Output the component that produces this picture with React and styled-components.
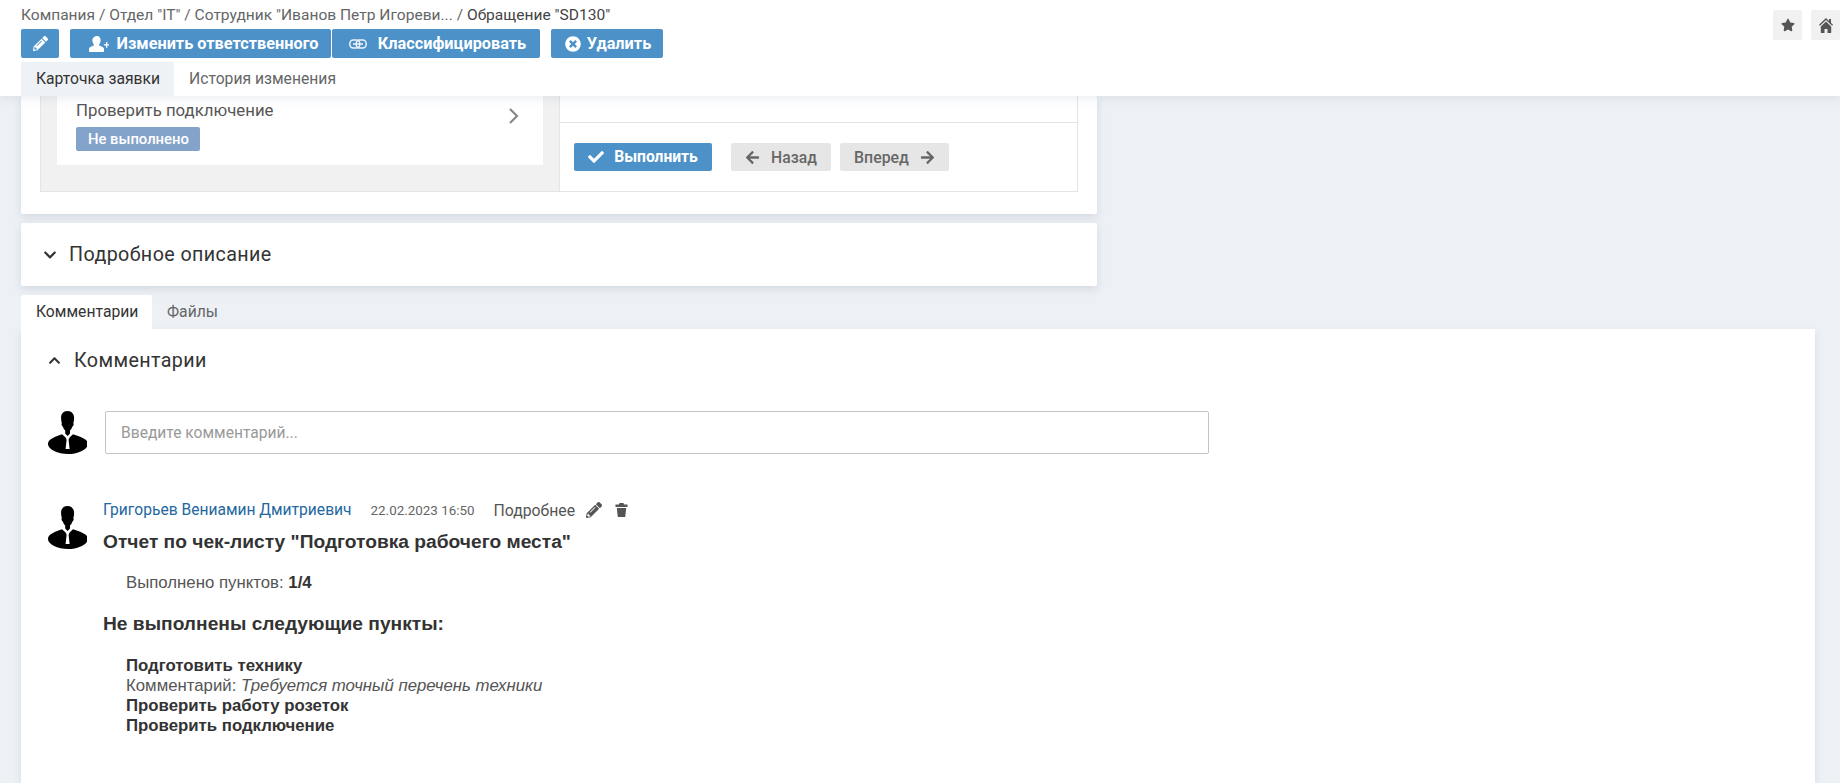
import React from 'react';
import styled, { createGlobalStyle } from 'styled-components';
import {
  FaPencilAlt, FaTimesCircle, FaCheck, FaArrowLeft, FaArrowRight,
  FaStar, FaChevronDown, FaChevronUp,
} from 'react-icons/fa';

const GlobalStyle = createGlobalStyle`
  html, body {
    margin: 0;
    padding: 0;
    background: #edf1f6;
  }
  * {
    box-sizing: border-box;
  }
`;

const Page = styled.div`
  height: 783px;
  overflow: hidden;
  font-family: Roboto, sans-serif;
  color: #333;
  background: #edf1f6;
`;

const Header = styled.header`
  position: relative;
  z-index: 2;
  height: 96px;
  padding: 0 0 0 21px;
  display: flex;
  justify-content: space-between;
  background: #fff;
  box-shadow: 0 2px 10px rgba(60, 80, 110, 0.1);
`;

const HeaderMain = styled.div`
  display: flex;
  flex-direction: column;
`;

const Breadcrumb = styled.div`
  height: 29px;
  padding-top: 5px;
  font-size: 15.55px;
  line-height: 20px;
  white-space: nowrap;
  color: #666;

  b {
    font-weight: 400;
    color: #444;
  }
`;

const Toolbar = styled.div`
  display: flex;
  height: 29px;
  gap: 11px;
`;

const ButtonGroup = styled.div`
  display: flex;
  gap: 1px;
`;

const Button = styled.button`
  height: ${(p) => p.$height || 29}px;
  width: ${(p) => p.$width}px;
  padding: 0 0 0 ${(p) => p.$shift || 0}px;
  display: flex;
  align-items: center;
  justify-content: center;
  gap: ${(p) => p.$gap ?? 8}px;
  border: none;
  border-radius: 2px;
  font-family: Roboto, sans-serif;
  font-size: ${(p) => p.$size || 16.3}px;
  font-weight: 700;
  white-space: nowrap;
  background: #4d91c9;
  color: #fff;
`;

const GreyButton = styled(Button)`
  font-weight: 500;
  background: #e6e6e6;
  color: #666;
`;

const Tabs = styled.div`
  display: flex;
  margin-top: ${(p) => p.$top || 0}px;
  height: 34px;
`;

const Tab = styled.div`
  width: ${(p) => p.$width}px;
  padding-left: 15px;
  font-size: 15.7px;
  line-height: 34px;
  border-radius: 2px 2px 0 0;
  white-space: nowrap;
  color: ${(p) => (p.$active ? '#333' : '#666')};
  background: ${(p) => (p.$active ? p.$activeBg : 'transparent')};
`;

const HeaderActions = styled.div`
  display: flex;
  gap: 9px;
  padding-top: 10px;
`;

const SquareButton = styled.div`
  width: 29px;
  height: 30px;
  display: flex;
  align-items: center;
  justify-content: center;
  border-radius: 2px;
  background: #f1f1f1;
  color: #555;
`;

const Content = styled.main`
  padding: 0 25px 0 21px;
`;

const Card = styled.section`
  width: 1076px;
  background: #fff;
  border-radius: 2px;
  box-shadow: 0 3px 8px rgba(60, 80, 110, 0.15);
`;

const StepCard = styled(Card)`
  height: 118px;
  padding: 0 19px 0 19px;
`;

const StepPanel = styled.div`
  height: 96px;
  display: flex;
  border: 1px solid #e4e4e4;
  border-top: none;
`;

const StepList = styled.div`
  width: 519px;
  padding: 0 16px;
  background: #f1f1f1;
  border-right: 1px solid #e4e4e4;
`;

const StepItem = styled.div`
  height: 69px;
  padding: 4px 19px 0;
  display: flex;
  justify-content: space-between;
  background: #fff;
`;

const StepText = styled.div`
  font-size: 16.8px;
  line-height: 20px;
  color: #555;
`;

const StepChevron = styled.div`
  padding: 7px 5px 0 0;
  color: #888;
  line-height: 0;
`;

const Badge = styled.div`
  width: 124px;
  height: 24px;
  margin-top: 7px;
  padding-left: 12px;
  border-radius: 2px;
  font-size: 14.8px;
  font-weight: 500;
  line-height: 24px;
  color: #fff;
  background: #84a3cb;
`;

const StepSide = styled.div`
  flex: 1;
  display: flex;
  flex-direction: column;
`;

const StepSideTop = styled.div`
  height: 27px;
  border-bottom: 1px solid #e4e4e4;
`;

const StepActions = styled.div`
  display: flex;
  padding: 20px 0 0 14px;
  gap: 9px;
`;

const DoneButton = styled(Button)`
  margin-right: 10px;
`;

const AccordionCard = styled(Card)`
  height: 63px;
  margin-top: 9px;
  padding: 0 22px;
  display: flex;
  align-items: center;
  gap: 12px;
`;

const SectionTitle = styled.h2`
  margin: 0;
  font-size: 19.7px;
  font-weight: 400;
  letter-spacing: 0.4px;
  white-space: nowrap;
  color: #333;
`;

const TabsPanel = styled.section`
  height: 454px;
  padding: 19px 0 0 27px;
  background: #fff;
  box-shadow: 0 3px 8px rgba(60, 80, 110, 0.12);
`;

const PanelHeader = styled.div`
  display: flex;
  align-items: center;
  gap: 13px;
  height: 24px;
`;

const InputRow = styled.div`
  display: flex;
  align-items: center;
  gap: 18px;
  margin-top: 39px;
`;

const CommentInput = styled.input`
  width: 1104px;
  height: 43px;
  padding: 0 15px;
  border: 1px solid #c4c4c4;
  border-radius: 2px;
  font-family: Roboto, sans-serif;
  font-size: 15.6px;
  color: #333;

  &::placeholder {
    color: #999;
  }
`;

const Comment = styled.article`
  display: flex;
  gap: 16px;
  margin-top: 52px;
`;

const AvatarBox = styled.div`
  width: 39px;
  flex: none;
  line-height: 0;
`;

const CommentBody = styled.div`
  flex: 1;
`;

const CommentMeta = styled.div`
  display: flex;
  align-items: center;
  height: 20px;
  margin-top: -6px;
`;

const Author = styled.a`
  font-size: 15.6px;
  color: #23679f;
`;

const DateText = styled.span`
  margin-left: 19px;
  font-size: 13.4px;
  color: #666;
`;

const MoreLink = styled.span`
  margin-left: 19px;
  font-size: 15.8px;
  color: #555;
`;

const MetaIcon = styled.span`
  margin-left: ${(p) => p.$left}px;
  line-height: 0;
  color: #555;
`;

const Report = styled.div`
  font-family: 'Liberation Sans', Arial, sans-serif;
  color: #333;
`;

const ReportTitle = styled.div`
  margin-top: ${(p) => p.$top}px;
  font-size: 19.2px;
  line-height: 24px;
  font-weight: 700;
  white-space: nowrap;
`;

const ReportBlock = styled.div`
  margin-top: ${(p) => p.$top}px;
  padding-left: 23px;
  font-size: 16.8px;
  line-height: 20px;
  white-space: nowrap;
  color: #555;

  b {
    color: #333;
  }
`;

const UserPlusIcon = () => (
  <svg width="20" height="16" viewBox="0 0 20 16" fill="currentColor">
    <path d="M8 0c2.300 0 3.600 1.800 3.600 4.200 0 1.500-.5 3-1.400 4v1.300c2.600.8 4.800 1.800 4.800 3.300V15c0 .5-.5 1-1 1H1c-.5 0-1-.5-1-1v-2.200c0-1.500 2.200-2.500 4.800-3.300V8.200c-.9-1-1.400-2.500-1.400-4C3.400 1.800 5.700 0 8 0z" />
    <path d="M17 6h1.300v2.200H20.400v1.300h-2.100v2.200H17V9.500h-2.100V8.200H17z" />
  </svg>
);

const LinkIcon = () => (
  <svg width="18" height="10" viewBox="0 0 18 10" fill="none" stroke="currentColor" strokeWidth="1.5" opacity="0.9">
    <rect x="0.8" y="1" width="10" height="8" rx="3.5" />
    <rect x="7.200" y="1" width="10" height="8" rx="3.500" />
    <path d="M4 5h10" />
  </svg>
);

const ChevronThin = () => (
  <svg width="11" height="18" viewBox="0 0 11 18" fill="none" stroke="currentColor" strokeWidth="2.200">
    <path d="M2 2l7 7-7 7" />
  </svg>
);

const HomeIcon = () => (
  <svg width="14" height="15" viewBox="0 0 14 15" fill="currentColor">
    <path d="M7 0l3 2.900V1h2v3.800l2 2-.9 1L7 2 .9 7.800 0 6.800z" />
    <path d="M7 3.400l5.200 5V15H8.500v-4h-3v4H1.800V8.400z" />
  </svg>
);

const TrashIcon = () => (
  <svg width="13" height="14" viewBox="0 0 13 14" fill="currentColor">
    <path d="M4.500 0h4l.5 1.500h3.500V4H.5V1.500H4z" />
    <path d="M1.800 5h9.400l-1 9H2.800z" />
  </svg>
);

const Avatar = () => (
  <svg width="39" height="43" viewBox="0 0 39 43" fill="#000">
    <path d="M19.500 0c4.400 0 6.800 3.400 6.600 7.400 0 1.800-.3 3.200-.8 4.600.5.400.5 1.500 0 2.600-.3.700-.7 1-1 1.100-.5 1.700-1.300 3-2.300 3.900v3l-2.300 2.300-.1-.1-.1.1-2.300-2.300v-3c-1-.9-1.800-2.200-2.300-3.900-.3-.1-.7-.4-1-1.100-.5-1.100-.5-2.200 0-2.600-.5-1.400-.8-2.800-.8-4.600C12.700 3.400 15.100 0 19.500 0z" />
    <path d="M14 23.200l3.600 3.300 1 2.200-1 9.300h4l-1-9.300 1-2.200 3.400-3.300c5 1.500 9.800 3.200 12.800 5.600 1.300 1.100 2 2.600 2 4.400 0 4.700-8.800 9.800-19.500 9.800S0 37.900 0 33.200c0-1.800.7-3.300 2-4.400 3-2.400 7-4.100 12-5.600z" />
  </svg>
);

const App = () => {
  return (
    <Page>
      <GlobalStyle />
      <Header>
        <HeaderMain>
          <Breadcrumb>
            Компания / Отдел "IT" / Сотрудник "Иванов Петр Игореви... / <b>Обращение "SD130"</b>
          </Breadcrumb>
          <Toolbar>
            <Button $width={38}><FaPencilAlt size={15} /></Button>
            <ButtonGroup>
              <Button $width={261} $shift={6} $gap={8}><UserPlusIcon />Изменить ответственного</Button>
              <Button $width={208} $shift={3} $gap={11}><LinkIcon />Классифицировать</Button>
            </ButtonGroup>
            <Button $width={112} $shift={2} $gap={6}><FaTimesCircle size={16} />Удалить</Button>
          </Toolbar>
          <Tabs $top={4}>
            <Tab $active $activeBg="#eef1f6" $width={153}>Карточка заявки</Tab>
            <Tab $width={170}>История изменения</Tab>
          </Tabs>
        </HeaderMain>
        <HeaderActions>
          <SquareButton><FaStar size={14} /></SquareButton>
          <SquareButton><HomeIcon /></SquareButton>
        </HeaderActions>
      </Header>
      <Content>
        <StepCard>
          <StepPanel>
            <StepList>
              <StepItem>
                <div>
                  <StepText>Проверить подключение</StepText>
                  <Badge>Не выполнено</Badge>
                </div>
                <StepChevron><ChevronThin /></StepChevron>
              </StepItem>
            </StepList>
            <StepSide>
              <StepSideTop />
              <StepActions>
                <DoneButton $width={138} $height={28} $size={15.6} $gap={10}><FaCheck size={16} />Выполнить</DoneButton>
                <GreyButton $width={100} $height={28} $size={15.7} $gap={11}><FaArrowLeft size={15} />Назад</GreyButton>
                <GreyButton $width={109} $height={28} $size={15.9} $gap={11}>Вперед<FaArrowRight size={15} /></GreyButton>
              </StepActions>
            </StepSide>
          </StepPanel>
        </StepCard>
        <AccordionCard>
          <FaChevronDown size={14} color="#333" />
          <SectionTitle>Подробное описание</SectionTitle>
        </AccordionCard>
        <Tabs $top={9}>
          <Tab $active $activeBg="#fff" $width={131}>Комментарии</Tab>
          <Tab $width={90}>Файлы</Tab>
        </Tabs>
        <TabsPanel>
          <PanelHeader>
            <FaChevronUp size={13} color="#333" />
            <SectionTitle>Комментарии</SectionTitle>
          </PanelHeader>
          <InputRow>
            <AvatarBox><Avatar /></AvatarBox>
            <CommentInput placeholder="Введите комментарий..." />
          </InputRow>
          <Comment>
            <AvatarBox><Avatar /></AvatarBox>
            <CommentBody>
              <CommentMeta>
                <Author>Григорьев Вениамин Дмитриевич</Author>
                <DateText>22.02.2023 16:50</DateText>
                <MoreLink>Подробнее</MoreLink>
                <MetaIcon $left={11}><FaPencilAlt size={16} /></MetaIcon>
                <MetaIcon $left={13}><TrashIcon /></MetaIcon>
              </CommentMeta>
              <Report>
                <ReportTitle $top={10}>Отчет по чек-листу "Подготовка рабочего места"</ReportTitle>
                <ReportBlock $top={19}>Выполнено пунктов: <b>1/4</b></ReportBlock>
                <ReportTitle $top={19}>Не выполнены следующие пункты:</ReportTitle>
                <ReportBlock $top={20}>
                  <div><b>Подготовить технику</b></div>
                  <div>Комментарий: <i>Требуется точный перечень техники</i></div>
                  <div><b>Проверить работу розеток</b></div>
                  <div><b>Проверить подключение</b></div>
                </ReportBlock>
              </Report>
            </CommentBody>
          </Comment>
        </TabsPanel>
      </Content>
    </Page>
  );
};

export default App;
